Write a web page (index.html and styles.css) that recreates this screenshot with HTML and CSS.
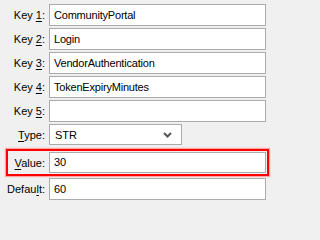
FILE: index.html
```html
<!DOCTYPE html>
<html>
<head>
<meta charset="utf-8">
<link rel="stylesheet" href="styles.css">
</head>
<body>
<div class="form">
  <div class="row"><label class="lbl">Key <u>1</u>:</label><div class="field">CommunityPortal</div></div>
  <div class="row"><label class="lbl">Key <u>2</u>:</label><div class="field">Login</div></div>
  <div class="row"><label class="lbl">Key <u>3</u>:</label><div class="field">VendorAuthentication</div></div>
  <div class="row"><label class="lbl">Key <u>4</u>:</label><div class="field">TokenExpiryMinutes</div></div>
  <div class="row"><label class="lbl">Key <u>5</u>:</label><div class="field"></div></div>
  <div class="row"><label class="lbl"><u>T</u>ype:</label><div class="select"><span>STR</span><svg class="chev" width="9" height="6" viewBox="0 0 9 6"><polyline points="1,1 4.5,4.5 8,1" fill="none" stroke="#555" stroke-width="2"/></svg></div></div>
  <div class="row hl"><label class="lbl"><u>V</u>alue:</label><div class="field">30</div></div>
  <div class="row"><label class="lbl">Defau<u>l</u>t:</label><div class="field">60</div></div>
</div>
</body>
</html>
```
FILE: styles.css
```css
html, body {
  margin: 0;
  padding: 0;
  background: #f0f0f0;
}
.form {
  width: 271px;
  height: 202px;
  box-sizing: border-box;
  display: flex;
  flex-direction: column;
  padding-top: 4px;
  font-family: "Liberation Sans", Arial, sans-serif;
  font-size: 11px;
  color: #000;
  overflow: hidden;
}
.row {
  display: flex;
  align-items: center;
  height: 22px;
  margin: 0 5px 2px 0;
  flex: none;
}
.lbl {
  width: 49px;
  box-sizing: border-box;
  padding-right: 4px;
  text-align: right;
  flex: none;
}
.lbl u {
  text-decoration-thickness: 1px;
  text-underline-offset: 2px;
}
.field {
  flex: 1;
  height: 22px;
  box-sizing: border-box;
  border: 1px solid #ababab;
  background: #fff;
  padding: 0 4px;
  line-height: 20px;
  letter-spacing: -0.2px;
}
.select {
  width: 133px;
  height: 21px;
  box-sizing: border-box;
  border: 1px solid #ababab;
  background: #fff;
  padding: 0 4px 0 5px;
  display: flex;
  align-items: center;
  justify-content: space-between;
  margin-top: -1px;
}
.chev {
  margin-right: 5px;
  margin-top: 1px;
}
.hl {
  margin: 1px 2px 2px 6px;
  height: 21px;
  border: 2px solid #ff0000;
  box-shadow: 0 0 1px 1px rgba(255, 120, 120, 0.6);
  padding: 1px 1px 1px 0;
}
.hl .lbl {
  width: 41px;
}
.hl .field {
  height: 21px;
  line-height: 19px;
}
```
